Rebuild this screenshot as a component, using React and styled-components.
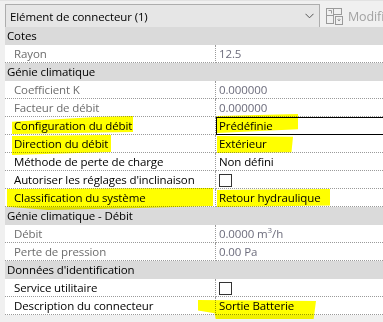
import React from "react";
import styled, { createGlobalStyle, css } from "styled-components";

const GlobalStyle = createGlobalStyle`
  html, body { margin: 0; padding: 0; background: #f0f0f0; }
  body { font-family: "Open Sans", "Noto Sans", "Liberation Sans", sans-serif; font-size: 11.5px; letter-spacing: -0.12px; color: #000; }
`;

const Panel = styled.div`
  position: relative;
  width: 383px;
  height: 322px;
  overflow: hidden;
  background: #f0f0f0;
`;

const Toolbar = styled.div`
  height: 27px;
  box-sizing: border-box;
  border-top: 1px solid #e2e2e2;
  display: flex;
  align-items: flex-start;
  padding: 3px 0 0 5px;
  gap: 6px;
  overflow: hidden;
`;

const TypeSelect = styled.div`
  flex: 0 0 315px;
  height: 24px;
  box-sizing: border-box;
  border: 1px solid #adadad;
  background: #e6e6e6;
  display: flex;
  align-items: center;
  justify-content: space-between;
  padding: 0 5px 0 4px;
  white-space: nowrap;
`;

const EditType = styled.div`
  flex: 0 0 auto;
  display: flex;
  align-items: center;
  gap: 5px;
  height: 24px;
  color: #a2a2a2;
  font-size: 12.5px;
  white-space: nowrap;
`;

const Grid = styled.div`
  margin-left: 5px;
  background: #fff;
`;

const SectionHeader = styled.div`
  height: 18px;
  line-height: 18px;
  background: #dadada;
  padding-left: 2px;
  white-space: nowrap;
`;

const Row = styled.div`
  display: grid;
  grid-template-columns: 211px 1fr;
  height: 18px;
`;

const Cell = styled.div`
  box-sizing: border-box;
  height: 18px;
  line-height: 17px;
  border-bottom: 1px dotted #9a9a9a;
  white-space: nowrap;
  overflow: hidden;
`;

const LabelCell = styled(Cell)`
  padding-left: 9px;
  border-right: 1px dotted #9a9a9a;
  color: ${(p) => (p.$readonly ? "#6d6d6d" : "#000")};
`;

const ValueCell = styled(Cell)`
  padding-left: 3px;
  color: ${(p) => (p.$readonly ? "#6c6c7c" : "#000")};
  display: flex;
  align-items: center;
  ${(p) =>
    p.$selected &&
    css`
      border: 1px solid #000;
      border-right: none;
      padding-left: 2px;
      line-height: 16px;
    `}
`;

const Checkbox = styled.span`
  display: inline-block;
  width: 13px;
  height: 13px;
  box-sizing: border-box;
  border: 1px solid #333;
  background: #fff;
  margin-top: 1px;
`;

const MarkLayer = styled.div`
  position: absolute;
  inset: 0;
  pointer-events: none;
  mix-blend-mode: multiply;
`;

const Mark = styled.div`
  position: absolute;
  background: #ffff00;
  mix-blend-mode: multiply;
`;

const Sup = styled.sup`
  font-size: 8px;
  line-height: 0;
`;

function Chevron() {
  return (
    <svg width="9" height="6" viewBox="0 0 9 6">
      <path d="M0.5 0.8 L4.5 4.8 L8.5 0.8" fill="none" stroke="#555" strokeWidth="1" />
    </svg>
  );
}

function EditTypeIcon() {
  return (
    <svg width="17" height="17" viewBox="0 0 17 17" fill="none" stroke="#9a9a9a" strokeWidth="1">
      <rect x="0.5" y="0.5" width="7" height="7" />
      <path d="M2.5 2.5 H5.5 V5.5" />
      <rect x="0.5" y="7.5" width="7" height="8" />
      <rect x="7.5" y="0.5" width="8" height="6" />
      <rect x="9.5" y="8.5" width="7" height="8" fill="#f0f0f0" />
      <path d="M11.5 11.5 L13 13 L14.5 11.5 M13 10.5 V13" />
    </svg>
  );
}

const sections = [
  {
    title: "Cotes",
    rows: [{ label: "Rayon", value: "12.5", ro: true }],
  },
  {
    title: "Génie climatique",
    rows: [
      { label: "Coefficient K", value: "0.000000", ro: true },
      { label: "Facteur de débit", value: "0.000000", ro: true },
      { label: "Configuration du débit", value: "Prédéfinie", selected: true },
      { label: "Direction du débit", value: "Extérieur" },
      { label: "Méthode de perte de charge", value: "Non défini" },
      { label: "Autoriser les réglages d'inclinaison", check: true },
      { label: "Classification du système", value: "Retour hydraulique" },
    ],
  },
  {
    title: "Génie climatique - Débit",
    rows: [
      {
        label: "Débit",
        value: (
          <span>
            0.0000 m<Sup>3</Sup>/h
          </span>
        ),
        ro: true,
      },
      { label: "Perte de pression", value: "0.00 Pa", ro: true },
    ],
  },
  {
    title: "Données d'identification",
    rows: [
      { label: "Service utilitaire", check: true },
      { label: "Description du connecteur", value: "Sortie Batterie" },
    ],
  },
];

const marks = [
  { l: 12, t: 115, w: 121, h: 19, clip: "polygon(0 35%, 70% 10%, 100% 5%, 100% 90%, 0 100%)" },
  { l: 217, t: 114, w: 81, h: 19, clip: "polygon(0 10%, 100% 0, 100% 80%, 0 100%)" },
  { l: 12, t: 135, w: 99, h: 20, clip: "polygon(0 5%, 100% 0, 100% 85%, 0 100%)" },
  { l: 217, t: 136, w: 76, h: 17, clip: "polygon(0 0, 100% 5%, 98% 95%, 0 100%)" },
  { l: 7, t: 188, w: 206, h: 22, clip: "polygon(0 5%, 100% 0, 100% 82%, 60% 92%, 20% 100%, 0 85%)" },
  { l: 217, t: 189, w: 113, h: 18, clip: "polygon(0 5%, 100% 0, 100% 92%, 0 100%)" },
  { l: 198, t: 300, w: 118, h: 19, clip: "polygon(0 0, 100% 5%, 98% 100%, 15% 100%, 14% 70%, 0 55%)" },
];

export default function App() {
  return (
    <>
      <GlobalStyle />
      <Panel>
        <Toolbar>
          <TypeSelect>
            <span>Elément de connecteur (1)</span>
            <Chevron />
          </TypeSelect>
          <EditType>
            <EditTypeIcon />
            <span>Modifier le type</span>
          </EditType>
        </Toolbar>
        <Grid>
          {sections.map((s) => (
            <React.Fragment key={s.title}>
              <SectionHeader>{s.title}</SectionHeader>
              {s.rows.map((r) => (
                <Row key={r.label}>
                  <LabelCell $readonly={r.ro}>{r.label}</LabelCell>
                  <ValueCell $readonly={r.ro} $selected={r.selected}>
                    {r.check ? <Checkbox /> : r.value}
                  </ValueCell>
                </Row>
              ))}
            </React.Fragment>
          ))}
        </Grid>
        <MarkLayer>
          {marks.map((m, i) => (
            <Mark
              key={i}
              style={{ left: m.l, top: m.t, width: m.w, height: m.h, clipPath: m.clip }}
            />
          ))}
        </MarkLayer>
      </Panel>
    </>
  );
}
